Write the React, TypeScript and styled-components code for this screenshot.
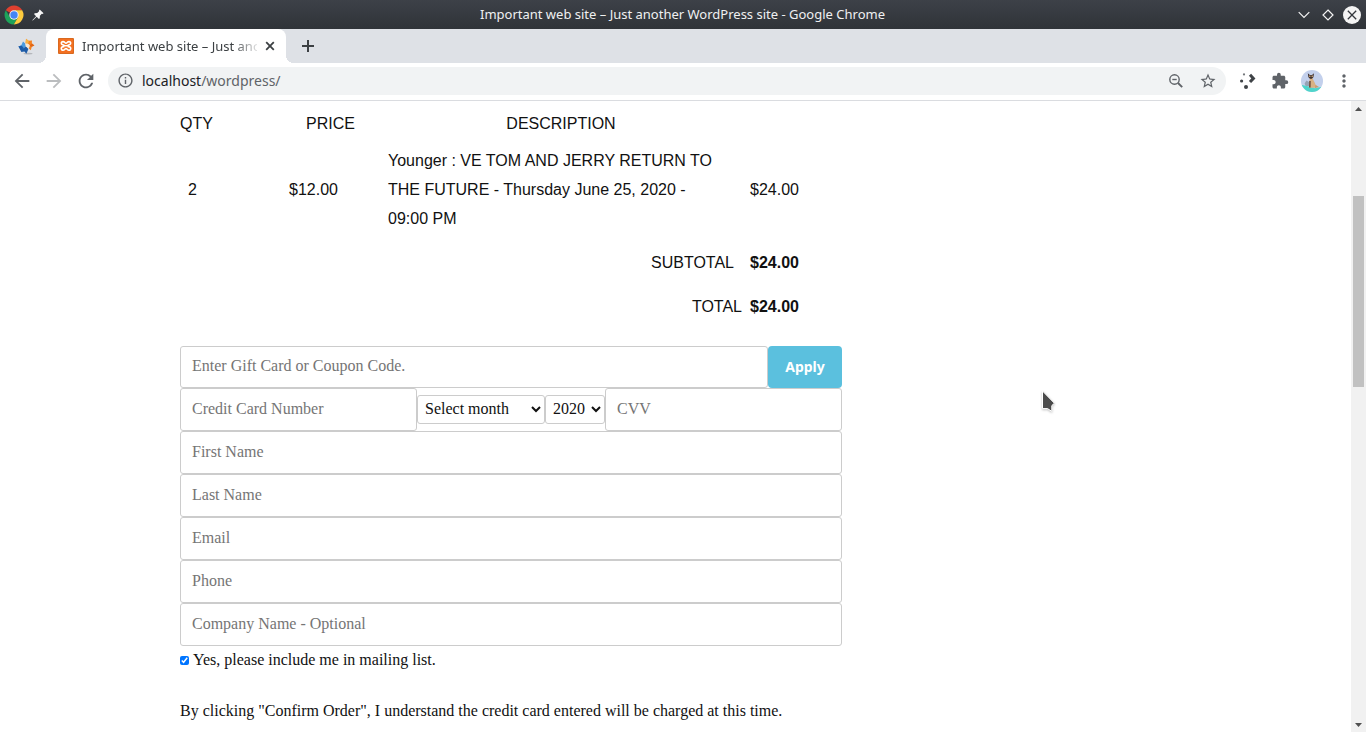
import React from "react";
import styled, { createGlobalStyle, css } from "styled-components";
import {
  MdArrowBack,
  MdArrowForward,
  MdRefresh,
  MdInfoOutline,
  MdStarBorder,
  MdExtension,
  MdMoreVert,
} from "react-icons/md";

const ui = `"Noto Sans", "Open Sans", sans-serif`;
const serif = `"Liberation Serif", "Times New Roman", serif`;
const sans = `"Liberation Sans", Arial, sans-serif`;

const GlobalStyle = createGlobalStyle`
  *, *::before, *::after { box-sizing: border-box; }
  html, body, #root { height: 100%; }
  body { margin: 0; background: #fff; overflow: hidden; }
  button { border: 0; padding: 0; background: none; font: inherit; color: inherit; }
  svg { display: block; flex: none; }
`;

const Window = styled.div`
  position: relative;
  display: flex;
  flex-direction: column;
  height: 100%;
`;

const TitleBar = styled.header`
  flex: none;
  display: grid;
  grid-template-columns: 1fr auto 1fr;
  align-items: center;
  height: 29px;
  padding: 0 5px 0 4px;
  background: linear-gradient(#3d4148, #2f3338);
  color: #eff0f1;
  font: 13px/29px ${ui};
`;

const TitleSide = styled.div<{ $end?: boolean; $gap: number }>`
  display: flex;
  align-items: center;
  justify-content: ${(p) => (p.$end ? "flex-end" : "flex-start")};
  gap: ${(p) => p.$gap}px;
`;

const TabStrip = styled.nav`
  flex: none;
  display: flex;
  height: 34px;
  background: #dee1e6;
  color: #3c4043;
`;

const PinnedTab = styled.button`
  width: 46px;
  display: flex;
  align-items: center;
  justify-content: flex-end;
  padding-right: 11px;
`;

const foot = css`
  content: "";
  position: absolute;
  bottom: 0;
  width: 8px;
  height: 8px;
`;

const ActiveTab = styled.div`
  position: relative;
  display: flex;
  align-items: center;
  width: 240px;
  padding: 0 11px 0 12px;
  background: #fff;
  border-radius: 8px 8px 0 0;
  &::before {
    ${foot}
    left: -8px;
    background: radial-gradient(circle at 0 0, transparent 8px, #fff 8px);
  }
  &::after {
    ${foot}
    right: -8px;
    background: radial-gradient(circle at 100% 0, transparent 8px, #fff 8px);
  }
`;

const TabTitle = styled.span`
  flex: 1;
  min-width: 0;
  margin: 0 8px;
  overflow: hidden;
  white-space: nowrap;
  font: 13px/20px ${ui};
  mask-image: linear-gradient(to right, #000 86%, rgba(0, 0, 0, 0.15));
`;

const IconButton = styled.button<{ $w: number; $c?: string }>`
  flex: none;
  display: flex;
  align-items: center;
  justify-content: center;
  width: ${(p) => p.$w}px;
  color: ${(p) => p.$c || "#5f6368"};
`;

const Toolbar = styled.div`
  flex: none;
  display: flex;
  align-items: center;
  height: 38px;
  padding: 0 6px 2px;
  border-bottom: 1px solid #dadce0;
  background: #fff;
`;

const Omnibox = styled.div`
  flex: 1;
  display: flex;
  align-items: center;
  height: 28px;
  margin: 0 6px;
  padding: 0 2px 0 9px;
  border-radius: 14px;
  background: #f1f3f4;
  color: #5f6368;
  font: 14px/28px ${ui};
`;

const Address = styled.span`
  flex: 1;
  margin-left: 8px;
  b {
    font-weight: 400;
    color: #202124;
  }
`;

const Viewport = styled.div`
  flex: 1;
  min-height: 0;
  display: flex;
`;

const Page = styled.main`
  flex: 1;
  min-width: 0;
  overflow: hidden;
  padding: 8px 16px 0 180px;
  color: #111;
  font: 16px/29px ${serif};
`;

const Order = styled.div`
  max-width: 662px;
`;

const Cart = styled.table`
  width: 630px;
  border-collapse: collapse;
  table-layout: fixed;
  font: 16px/29px ${sans};
  th {
    padding: 0;
    font-weight: 400;
  }
  th:first-child {
    text-align: left;
  }
  td {
    padding: 8px 8px 7px;
  }
`;

const Sum = styled.td<{ $flush?: boolean }>`
  text-align: right;
  && {
    padding-right: ${(p) => (p.$flush ? 0 : 8)}px;
  }
`;

const Form = styled.form`
  margin-top: 18px;
`;

const Row = styled.div`
  display: flex;
  align-items: center;
`;

const Field = styled.input<{ $h?: number }>`
  display: block;
  flex: 1;
  width: 100%;
  min-width: 0;
  height: ${(p) => p.$h || 43}px;
  padding: 0 11px 2px;
  border: 1px solid #ccc;
  border-radius: 3px;
  background: #fff;
  color: #111;
  font: 16px/24px ${serif};
  &::placeholder {
    color: #757575;
    opacity: 1;
  }
`;

const Picker = styled.select<{ $w: number }>`
  width: ${(p) => p.$w}px;
  height: 29px;
  padding: 0 0 2px 3px;
  border: 1px solid #ccc;
  border-radius: 3px;
  background: #fff;
  color: #111;
  font: 16px/24px ${serif};
`;

const Apply = styled.button`
  width: 74px;
  height: 42px;
  border-radius: 4px;
  background: #5bc0de;
  color: #fff;
  font: 700 14px/42px ${ui};
`;

const Mailing = styled.label`
  display: flex;
  align-items: center;
  gap: 4px;
  height: 29px;
  span {
    padding-bottom: 2px;
  }
  input {
    width: 9px;
    height: 9px;
    margin: 0;
    accent-color: #0075ff;
  }
`;

const Terms = styled.p`
  margin: 21px 0 0;
`;

const Scrollbar = styled.div`
  flex: none;
  display: grid;
  grid-template-rows: 15px 80fr 191px 330fr 15px;
  justify-items: center;
  align-items: center;
  width: 15px;
  background: #f1f1f1;
`;

const Thumb = styled.div`
  grid-row: 3;
  width: 11px;
  height: 100%;
  background: #c1c1c1;
`;

const ArrowSlot = styled.div<{ $row: number }>`
  grid-row: ${(p) => p.$row};
`;

const Pointer = styled.svg`
  position: absolute;
  left: 1041px;
  top: 390px;
  filter: drop-shadow(0 1px 1px rgba(0, 0, 0, 0.25));
`;

const ChromeLogo = () => (
  <svg width="20" height="20" viewBox="0 0 20 20">
    <path d="M10 10 1.8 5.3A9.5 9.5 0 0 1 18.2 5.3L10 5.3Z" fill="#e0402f" />
    <path d="M1.8 5.3A9.5 9.5 0 0 0 9.8 19.5L14 12.3 10 14.6 6 12.3Z" fill="#1da35a" />
    <path d="M18.2 5.3A9.5 9.5 0 0 1 9.8 19.5L14.1 12.3 14 7.7 10 5.3Z" fill="#fdcb3e" />
    <circle cx="10" cy="10" r="4.7" fill="#f4f4f4" />
    <circle cx="10" cy="10" r="3.7" fill="#4285f4" />
  </svg>
);

const Pin = () => (
  <svg width="12" height="12" viewBox="0 0 12 12" fill="#f7f7f7">
    <path d="M7.7.4 11.6 4.3 10.4 5 9.8 4.8 7.9 6.8 7.8 9.2 6.9 10 4.7 7.8.8 11.6.3 11.2 4.1 7.2 2 5.1 2.8 4.2 5.2 4.1 7.1 2.2 7 1.5Z" />
  </svg>
);

const Pinwheel = () => (
  <svg width="17" height="17" viewBox="0 0 17 17">
    <ellipse cx="10" cy="15.6" rx="4.5" ry="0.9" fill="#b4b6ba" />
    <path d="M5 3.6 7.2 5.4 7.8 8.6 5.2 10.4.4 8.6 3.2 7.4Z" fill="#4a9be0" />
    <path d="M.4 8.6 5.2 10.2 8 8.4 10.4 11 8.4 15.8 6.4 13.6 3.4 14Z" fill="#1d5ca8" />
    <path d="M3.2 7.4.4 8.6 3.2 10.8 5.6 9.4Z" fill="#1d5ca8" />
    <path d="M8 .8 10.6 2.8 14 2.4 13.8 5.2 16.4 7.4 13.8 8.8 12.8 12.2 10.8 10.4 12 7.2 9.6 5.6 7.6 5.4Z" fill="#f58220" />
    <path d="M8 .8 7.6 5.4 10.4 5.4 10.8 3Z" fill="#fbb540" />
    <path d="M16.4 7.4 13.8 5.4 11.4 7.4 13.4 8.8Z" fill="#e0661a" />
    <path d="M7.4 5.6 9.8 5.8 11.6 7.4 10.4 10.2 8 8.2Z" fill="#fbe6cc" />
  </svg>
);

const XamppLogo = () => (
  <svg width="16" height="16" viewBox="0 0 16 16">
    <rect width="16" height="16" rx="1" fill="#d9691f" />
    <rect x="1" y="1" width="14" height="14" rx="1" fill="#f37021" />
    <path
      d="M5.6 7C2.6 6.8 2.8 3.6 5 3.6 6.8 3.6 6.8 5.2 8 5.2S9.2 3.6 11 3.6C13.2 3.6 13.4 6.8 10.4 7V8.6C13.4 8.6 13.4 12.2 11 12.2 9.2 12.2 9.2 10.6 8 10.6S6.8 12.2 5 12.2C2.6 12.2 2.6 8.6 5.6 8.6ZM5.6 7.8H10.4"
      fill="none"
      stroke="#fff"
      strokeWidth="1.6"
    />
  </svg>
);

const Cross = () => (
  <svg width="10" height="10" viewBox="0 0 10 10">
    <path d="M1.2 1.2 8.8 8.8M8.8 1.2 1.2 8.8" stroke="#3c4043" strokeWidth="1.8" />
  </svg>
);

const Plus = () => (
  <svg width="12" height="12" viewBox="0 0 12 12">
    <path d="M6 0V12M0 6H12" stroke="#3c4043" strokeWidth="2" />
  </svg>
);

const ZoomOut = () => (
  <svg width="14" height="14" viewBox="0 0 14 14" fill="none" stroke="#5f6368" strokeWidth="1.4">
    <circle cx="5.5" cy="5.5" r="4.7" />
    <path d="M3.3 5.5H7.7" />
    <path d="M9 9 13.2 13.2" strokeWidth="1.9" />
  </svg>
);

const DotsArrow = () => (
  <svg width="16" height="16" viewBox="0 0 16 16" fill="#3f4347">
    <circle cx="4" cy="1.4" r="1.1" fill="#74777b" />
    <circle cx="1.6" cy="8" r="1.6" />
    <circle cx="6" cy="14" r="2" />
    <path d="M10 1.8 13.4 5.4 10 9" fill="none" stroke="#3f4347" strokeWidth="3" />
  </svg>
);

const Avatar = () => (
  <svg width="22" height="22" viewBox="0 0 22 22">
    <clipPath id="avatar-edge">
      <circle cx="11" cy="11" r="11" />
    </clipPath>
    <g clipPath="url(#avatar-edge)">
      <rect width="22" height="22" fill="#c3d0ec" />
      <path d="M0 14.8 8 16.4 14 18.2 22 16.6V22H0Z" fill="#4fd5cb" />
      <path d="M3.6 13.6 5.4 10.6 8 12V16H4.6Z" fill="#97a3b4" />
      <path d="M9 8H11.4C12.4 11 15 13 15 17.8H8C7.8 14 8.2 11 9 8Z" fill="#d8b184" />
      <path d="M8.2 11H9.8L9.6 17.4H8Z" fill="#6c5142" />
      <path d="M6.8 3.2 8.8 5H11L13 3.2 12.4 7.2 10.8 8.8H9L7.4 7.2Z" fill="#40322f" />
      <path d="M8.2 5.6H9.4V7H8.2ZM10.6 5.6H11.8V7H10.6Z" fill="#d8b184" />
      <path d="M14.4 14.8 18 17 14 17.9Z" fill="#c79b6c" />
    </g>
  </svg>
);

const WindowButtons = () => (
  <>
    <IconButton $w={18} aria-label="Minimize">
      <svg width="12" height="8" viewBox="0 0 12 8">
        <path d="M.7 1.2 6 6.5 11.3 1.2" fill="none" stroke="#f4f4f4" strokeWidth="1.2" />
      </svg>
    </IconButton>
    <IconButton $w={18} aria-label="Maximize">
      <svg width="12" height="12" viewBox="0 0 12 12">
        <path d="M6 1 11 6 6 11 1 6Z" fill="none" stroke="#f4f4f4" strokeWidth="1.2" />
      </svg>
    </IconButton>
    <IconButton $w={18} aria-label="Close window">
      <svg width="18" height="18" viewBox="0 0 18 18">
        <circle cx="9" cy="9" r="9" fill="#f4f4f4" />
        <path d="M4.8 4.8 13.2 13.2M13.2 4.8 4.8 13.2" stroke="#33373c" strokeWidth="1.3" />
      </svg>
    </IconButton>
  </>
);

const fields = ["First Name", "Last Name", "Email", "Phone", "Company Name - Optional"];

export default function App() {
  return (
    <Window>
      <GlobalStyle />
      <TitleBar>
        <TitleSide $gap={8}>
          <ChromeLogo />
          <Pin />
        </TitleSide>
        <span>Important web site – Just another WordPress site - Google Chrome</span>
        <TitleSide $end $gap={6}>
          <WindowButtons />
        </TitleSide>
      </TitleBar>

      <TabStrip>
        <PinnedTab aria-label="Pinned tab">
          <Pinwheel />
        </PinnedTab>
        <ActiveTab>
          <XamppLogo />
          <TabTitle>Important web site – Just another WordPress site</TabTitle>
          <IconButton $w={10} aria-label="Close tab">
            <Cross />
          </IconButton>
        </ActiveTab>
        <IconButton $w={44} aria-label="New tab">
          <Plus />
        </IconButton>
      </TabStrip>

      <Toolbar>
        <IconButton $w={32} aria-label="Back">
          <MdArrowBack size={22} />
        </IconButton>
        <IconButton $w={32} $c="#bbbdbf" aria-label="Forward">
          <MdArrowForward size={22} />
        </IconButton>
        <IconButton $w={32} aria-label="Reload">
          <MdRefresh size={22} />
        </IconButton>
        <Omnibox>
          <MdInfoOutline size={17} />
          <Address>
            <b>localhost</b>/wordpress/
          </Address>
          <IconButton $w={32} aria-label="Zoom">
            <ZoomOut />
          </IconButton>
          <IconButton $w={32} aria-label="Bookmark">
            <MdStarBorder size={18} />
          </IconButton>
        </Omnibox>
        <IconButton $w={32} aria-label="Extension">
          <DotsArrow />
        </IconButton>
        <IconButton $w={32} aria-label="Extensions">
          <MdExtension size={18} />
        </IconButton>
        <IconButton $w={32} aria-label="Profile">
          <Avatar />
        </IconButton>
        <IconButton $w={32} aria-label="Menu">
          <MdMoreVert size={20} />
        </IconButton>
      </Toolbar>

      <Viewport>
        <Page>
          <Order>
            <Cart>
              <colgroup>
                <col width="101" />
                <col width="99" />
                <col width="362" />
                <col width="68" />
              </colgroup>
              <thead>
                <tr>
                  <th>QTY</th>
                  <th>PRICE</th>
                  <th>DESCRIPTION</th>
                  <th />
                </tr>
              </thead>
              <tbody>
                <tr>
                  <td>2</td>
                  <td>$12.00</td>
                  <td>{"Younger : VE TOM AND JERRY RETURN TO THE FUTURE - Thursday June 25, 2020 - 09:00\u00a0PM"}</td>
                  <td>$24.00</td>
                </tr>
                <tr>
                  <Sum colSpan={3}>SUBTOTAL</Sum>
                  <td>
                    <b>$24.00</b>
                  </td>
                </tr>
                <tr>
                  <Sum colSpan={3} $flush>
                    TOTAL
                  </Sum>
                  <td>
                    <b>$24.00</b>
                  </td>
                </tr>
              </tbody>
            </Cart>

            <Form onSubmit={(e) => e.preventDefault()}>
              <Row>
                <Field $h={42} placeholder="Enter Gift Card or Coupon Code." aria-label="Gift card or coupon code" />
                <Apply type="button">Apply</Apply>
              </Row>
              <Row>
                <Field placeholder="Credit Card Number" aria-label="Credit card number" />
                <Picker $w={128} aria-label="Expiry month">
                  <option>Select month</option>
                </Picker>
                <Picker $w={60} aria-label="Expiry year">
                  <option>2020</option>
                </Picker>
                <Field placeholder="CVV" aria-label="CVV" />
              </Row>
              {fields.map((name) => (
                <Field key={name} placeholder={name} aria-label={name} />
              ))}
              <Mailing>
                <input type="checkbox" defaultChecked />
                <span>Yes, please include me in mailing list.</span>
              </Mailing>
              <Terms>
                By clicking "Confirm Order", I understand the credit card entered will be charged at this time.
              </Terms>
            </Form>
          </Order>
        </Page>
        <Scrollbar aria-hidden="true">
          <ArrowSlot $row={1}>
            <svg width="7" height="4" viewBox="0 0 7 4">
              <path d="M3.5 0 7 4H0Z" fill="#505050" />
            </svg>
          </ArrowSlot>
          <Thumb />
          <ArrowSlot $row={5}>
            <svg width="7" height="4" viewBox="0 0 7 4">
              <path d="M3.5 4 7 0H0Z" fill="#505050" />
            </svg>
          </ArrowSlot>
        </Scrollbar>
      </Viewport>

      <Pointer width="15" height="23" viewBox="0 0 15 23" aria-hidden="true">
        <path d="M1.5 1 13.4 13.2 10.8 15.6V21.4L6.6 18.6H1.5Z" fill="#4a4a4a" stroke="#fff" strokeWidth="1" />
      </Pointer>
    </Window>
  );
}
